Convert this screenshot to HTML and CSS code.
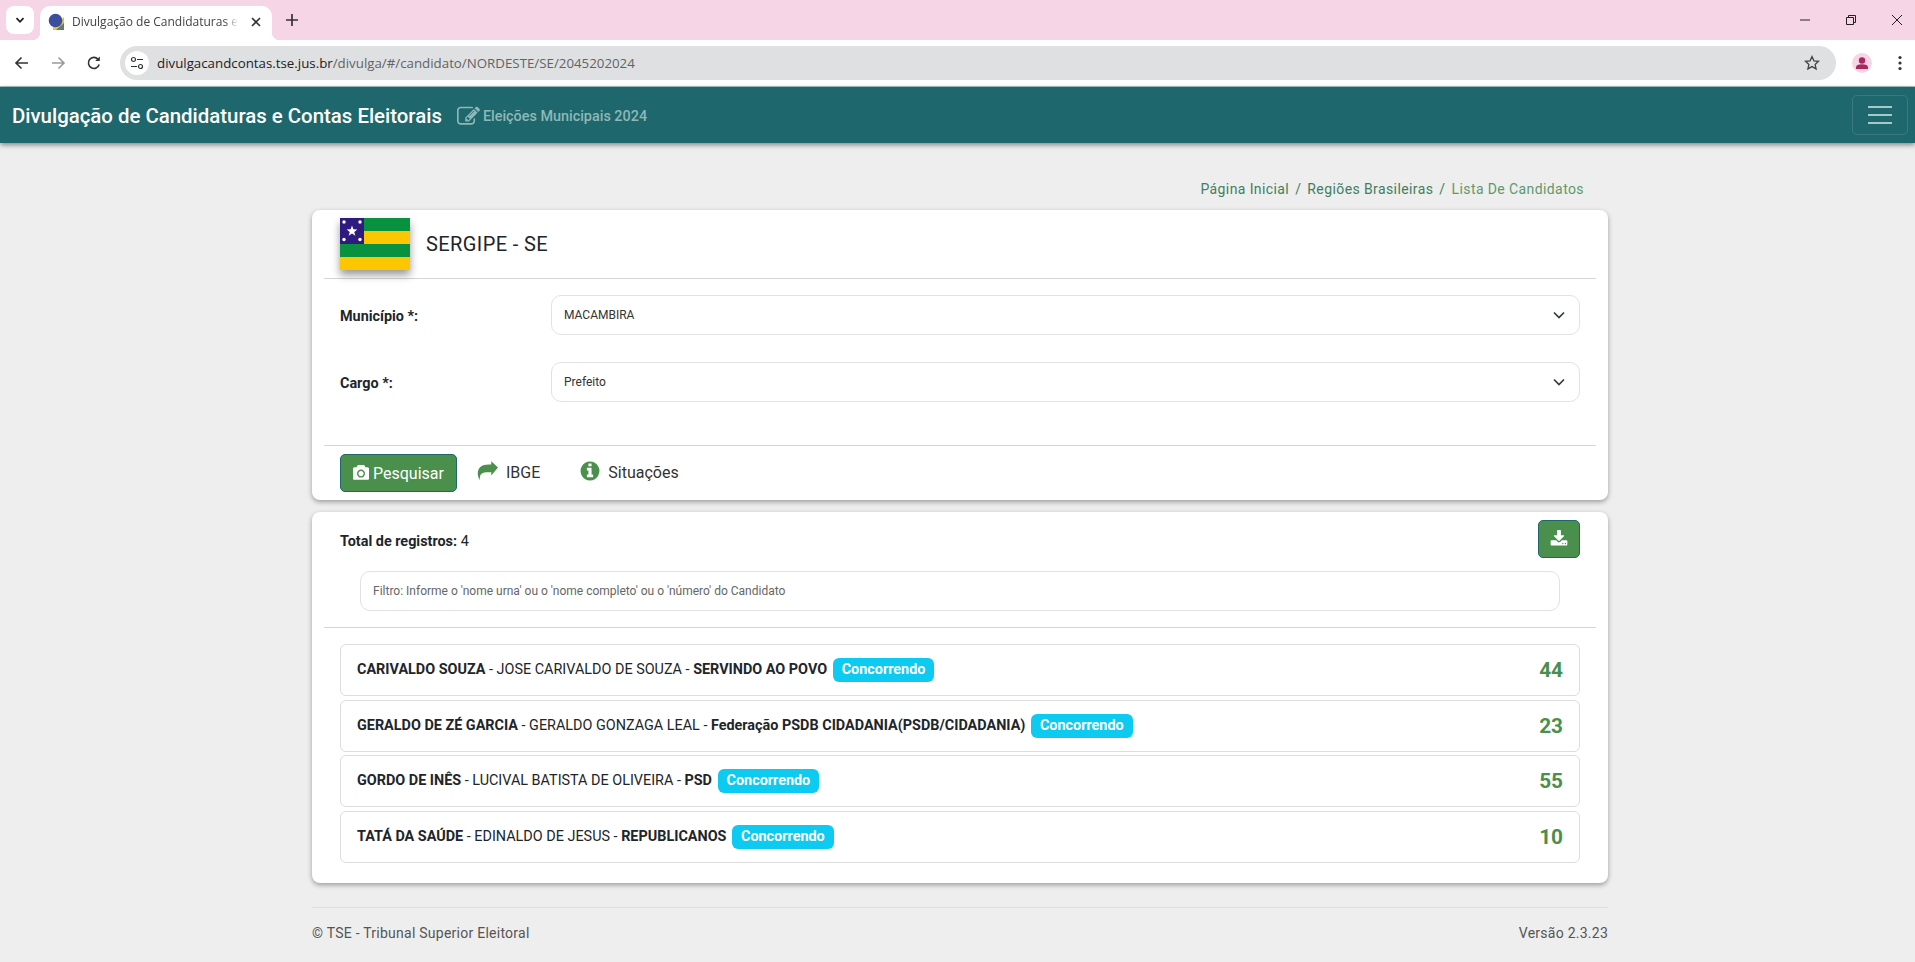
FILE: index.html
```html
<!DOCTYPE html>
<html lang="pt-BR">
  <head>
    <meta charset="UTF-8" />
    <title>Divulgação de Candidaturas e Contas Eleitorais</title>
    <link rel="stylesheet" href="styles.css">
  </head>
  <body>
    <!-- Browser frame -->
    <div class="tabstrip">
      <div class="tab-list">
        <svg width="12" height="12" viewBox="0 0 12 12"><path d="M2.5 4.2 6 7.8l3.5-3.6" fill="none" stroke="#222" stroke-width="1.8"/></svg>
      </div>
      <div class="tab">
        <svg class="favicon" width="18" height="18" viewBox="0 0 18 18">
          <path d="M5 14 16 4v13H5z" fill="#e8c33a"/>
          <path d="M8 17 16 10v7z" fill="#5d7f6a"/>
          <circle cx="7.5" cy="7.5" r="6.800" fill="#3c4f9c"/>
        </svg>
        <span class="tab-title">Divulgação de Candidaturas e Contas Eleitorais</span>
        <svg width="12" height="12" viewBox="0 0 12 12"><path d="M2 2l8 8M10 2l-8 8" stroke="#333" stroke-width="1.6"/></svg>
      </div>
      <svg class="new-tab" width="14" height="14" viewBox="0 0 14 14"><path d="M7 1v12M1 7h12" stroke="#333" stroke-width="1.7"/></svg>
      <div class="window-controls">
        <svg width="12" height="12" viewBox="0 0 12 12"><path d="M1 6h10" stroke="#222" stroke-width="1"/></svg>
        <svg width="12" height="12" viewBox="0 0 12 12"><path d="M1.5 3.5h7v7h-7zM3.5 3.5v-2h7v7h-2" fill="none" stroke="#222" stroke-width="1"/></svg>
        <svg width="12" height="12" viewBox="0 0 12 12"><path d="M1 1l10 10M11 1 1 11" stroke="#222" stroke-width="1"/></svg>
      </div>
    </div>
    <div class="toolbar">
      <svg class="tool" width="16" height="16" viewBox="0 0 16 16"><path d="M14 8H2.5M7.5 2.5 2 8l5.5 5.5" fill="none" stroke="#333" stroke-width="1.6"/></svg>
      <svg class="tool" width="16" height="16" viewBox="0 0 16 16"><path d="M2 8h11.5M8.5 2.5 14 8l-5.5 5.5" fill="none" stroke="#9a9a9a" stroke-width="1.6"/></svg>
      <svg class="tool" width="16" height="16" viewBox="0 0 16 16"><path d="M13.2 9.5A5.5 5.5 0 1 1 12 4.2" fill="none" stroke="#333" stroke-width="1.6"/><path d="M13.8 1.5v4.6H9.2z" fill="#333"/></svg>
      <div class="omnibox">
        <span class="site-info">
          <svg width="14" height="14" viewBox="0 0 14 14"><circle cx="3.5" cy="3.5" r="2" fill="none" stroke="#333" stroke-width="1.2"/><path d="M7 3.5h6M1 10.5h6" stroke="#333" stroke-width="1.2"/><circle cx="10.5" cy="10.5" r="2" fill="none" stroke="#333" stroke-width="1.2"/></svg>
        </span>
        <span class="url"><b>divulgacandcontas.tse.jus.br</b>/divulga/#/candidato/NORDESTE/SE/2045202024</span>
        <svg class="star" width="16" height="16" viewBox="0 0 16 16"><path d="M8 1.6l1.9 4.2 4.6.5-3.4 3.1 1 4.5L8 11.6l-4.1 2.3 1-4.5-3.4-3.1 4.6-.5z" fill="none" stroke="#444" stroke-width="1.3"/></svg>
      </div>
      <span class="avatar">
        <svg width="20" height="20" viewBox="0 0 20 20"><circle cx="10" cy="7.5" r="3.2" fill="#a9265f"/><path d="M4 16v-1.5c0-2 2-3.2 6-3.2s6 1.200 6 3.200V16z" fill="#a9265f"/></svg>
      </span>
      <svg class="kebab" width="4" height="16" viewBox="0 0 4 16"><circle cx="2" cy="2.500" r="1.600" fill="#333"/><circle cx="2" cy="8" r="1.600" fill="#333"/><circle cx="2" cy="13.500" r="1.600" fill="#333"/></svg>
    </div>

    <!-- Site header -->
    <nav class="navbar">
      <span class="brand">Divulgação de Candidaturas e Contas Eleitorais</span>
      <span class="election">
        <svg width="23" height="23" viewBox="0 0 1792 1792"><path fill="currentColor" d="M888 1184l116-116-152-152-116 116v56h96v96h56zm440-720q-16-16-33 1l-350 350q-17 17-1 33t33-1l350-350q17-17 1-33zm80 594v190q0 119-84.500 203.500t-203.500 84.500h-832q-119 0-203.500-84.500t-84.500-203.500v-832q0-119 84.500-203.500t203.500-84.500h832q63 0 117 25 15 7 18 23 3 17-9 29l-49 49q-14 14-32 8-23-6-45-6h-832q-66 0-113 47t-47 113v832q0 66 47 113t113 47h832q66 0 113-47t47-113v-126q0-13 9-22l64-64q15-15 35-7t20 29zm-96-738l288 288-672 672h-288v-288zm444 132l-92 92-288-288 92-92q28-28 68-28t68 28l152 152q28 28 28 68t-28 68z"/></svg>
        Eleições Municipais 2024
      </span>
      <button class="menu-toggle"><span></span><span></span><span></span></button>
    </nav>

    <main class="page">
      <div class="breadcrumb">
        <span>Página Inicial</span><i>/</i><span>Regiões Brasileiras</span><i>/</i><span class="current">Lista De Candidatos</span>
      </div>

      <section class="card search-card">
        <header class="state-header">
          <svg class="flag" width="70" height="52" viewBox="0 0 70 52">
            <rect width="70" height="13" fill="#08913f"/>
            <rect y="13" width="70" height="13" fill="#fcc700"/>
            <rect y="26" width="70" height="13" fill="#08913f"/>
            <rect y="39" width="70" height="13" fill="#fcc700"/>
            <rect width="24" height="26" fill="#2f1a80"/>
            <path d="M12 7.500l1.400 3.800 4 .1-3.200 2.500 1.200 3.900-3.400-2.300-3.400 2.300 1.200-3.900-3.200-2.500 4-.1z" fill="#fff"/>
            <circle cx="4" cy="4" r="1.700" fill="#fff"/>
            <circle cx="20" cy="4" r="1.700" fill="#fff"/>
            <circle cx="4" cy="21.500" r="1.700" fill="#fff"/>
            <circle cx="20" cy="21.500" r="1.700" fill="#fff"/>
          </svg>
          <h1>SERGIPE - SE</h1>
        </header>
        <div class="form-body">
          <div class="field">
            <label>Município *:</label>
            <div class="select">MACAMBIRA<svg width="14" height="14" viewBox="0 0 14 14"><path d="M2 4.500 7 9.500l5-5" fill="none" stroke="#343a40" stroke-width="1.700"/></svg></div>
          </div>
          <div class="field">
            <label>Cargo *:</label>
            <div class="select">Prefeito<svg width="14" height="14" viewBox="0 0 14 14"><path d="M2 4.500 7 9.500l5-5" fill="none" stroke="#343a40" stroke-width="1.700"/></svg></div>
          </div>
        </div>
        <div class="actions">
          <button class="btn-green btn-search">
            <svg width="16" height="16" viewBox="0 0 1792 1792"><path fill="currentColor" d="M896 672q119 0 203.500 84.500t84.500 203.500-84.500 203.500-203.500 84.500-203.500-84.500-84.500-203.500 84.500-203.500 203.500-84.500zm704-416q106 0 181 75t75 181v896q0 106-75 181t-181 75h-1408q-106 0-181-75t-75-181v-896q0-106 75-181t181-75h224l51-136q19-49 69.500-84.500t103.500-35.500h512q53 0 103.500 35.500t69.500 84.500l51 136h224zm-704 1152q185 0 316.500-131.500t131.500-316.500-131.500-316.500-316.500-131.500-316.500 131.500-131.500 316.500 131.500 316.500 316.500 131.500z"/></svg>
            Pesquisar
          </button>
          <a class="action-link link-ibge">
            <svg width="21" height="21" viewBox="0 0 1792 1792"><path fill="#4a8f4c" d="M1792 640 1216 96v288h-224C420 384 64 640 64 1180c0 220 90 400 190 520 -70-520 190-660 738-660h224v288z"/></svg>
            IBGE
          </a>
          <a class="action-link link-situacoes">
            <svg width="22" height="22" viewBox="0 0 1792 1792"><path fill="#4a8f4c" d="M1152 1376v-160q0-14-9-23t-23-9h-96v-512q0-14-9-23t-23-9h-320q-14 0-23 9t-9 23v160q0 14 9 23t23 9h96v320h-96q-14 0-23 9t-9 23v160q0 14 9 23t23 9h448q14 0 23-9t9-23zm-128-896v-160q0-14-9-23t-23-9h-192q-14 0-23 9t-9 23v160q0 14 9 23t23 9h192q14 0 23-9t9-23zm640 416q0 209-103 385.500t-279.500 279.500-385.500 103-385.500-103-279.500-279.500-103-385.500 103-385.500 279.500-279.500 385.500-103 385.500 103 279.500 279.500 103 385.500z"/></svg>
            Situações
          </a>
        </div>
      </section>

      <section class="card results-card">
        <div class="results-top">
          <span class="total"><b>Total de registros:</b> 4</span>
          <button class="btn-green btn-download">
            <svg width="18" height="18" viewBox="0 0 1792 1792"><path fill="currentColor" d="M1344 1344q0-26-19-45t-45-19-45 19-19 45 19 45 45 19 45-19 19-45zm256 0q0-26-19-45t-45-19-45 19-19 45 19 45 45 19 45-19 19-45zm128-224v320q0 40-28 68t-68 28h-1472q-40 0-68-28t-28-68v-320q0-40 28-68t68-28h465l135 136q58 56 136 56t136-56l136-136h464q40 0 68 28t28 68zm-325-569q17 41-14 70l-448 448q-18 19-45 19t-45-19l-448-448q-31-29-14-70 17-39 59-39h256v-448q0-26 19-45t45-19h256q26 0 45 19t19 45v448h256q42 0 59 39z"/></svg>
          </button>
        </div>
        <div class="filter">Filtro: Informe o 'nome urna' ou o 'nome completo' ou o 'número' do Candidato</div>
        <ul class="candidates">
          <li>
            <span class="cand-info"><b>CARIVALDO SOUZA</b> - JOSE CARIVALDO DE SOUZA - <b>SERVINDO AO POVO</b> <em class="badge">Concorrendo</em></span>
            <strong class="number">44</strong>
          </li>
          <li>
            <span class="cand-info"><b>GERALDO DE ZÉ GARCIA</b> - GERALDO GONZAGA LEAL - <b>Federação PSDB CIDADANIA(PSDB/CIDADANIA)</b> <em class="badge">Concorrendo</em></span>
            <strong class="number">23</strong>
          </li>
          <li>
            <span class="cand-info"><b>GORDO DE INÊS</b> - LUCIVAL BATISTA DE OLIVEIRA - <b>PSD</b> <em class="badge">Concorrendo</em></span>
            <strong class="number">55</strong>
          </li>
          <li>
            <span class="cand-info"><b>TATÁ DA SAÚDE</b> - EDINALDO DE JESUS - <b>REPUBLICANOS</b> <em class="badge">Concorrendo</em></span>
            <strong class="number">10</strong>
          </li>
        </ul>
      </section>

      <footer class="footer">
        <span>© TSE - Tribunal Superior Eleitoral</span>
        <span>Versão 2.3.23</span>
      </footer>
    </main>
  </body>
</html>
```

FILE: styles.css
```css
/* Reset */
html, body {
  margin: 0;
  padding: 0;
  height: 962px;
  overflow: hidden;
  background: #eee;
  font-family: Roboto, 'Liberation Sans', sans-serif;
  color: #212529;
}

/* Browser frame */
.tabstrip {
  display: flex;
  align-items: flex-start;
  height: 40px;
  background: #f6d6e6;
}

.tab-list {
  display: flex;
  align-items: center;
  justify-content: center;
  width: 28px;
  height: 28px;
  margin: 6px 6px 0;
  background: #fff;
  border-radius: 8px;
}

.tab {
  position: relative;
  display: flex;
  align-items: center;
  box-sizing: border-box;
  width: 232px;
  height: 34px;
  margin-top: 6px;
  padding: 0 10px 3px 8px;
  background: #fff;
  border-radius: 10px 10px 0 0;
}

.tab:before,
.tab:after {
  content: "";
  position: absolute;
  bottom: 0;
  width: 8px;
  height: 8px;
}

.tab:before {
  left: -8px;
  background: radial-gradient(circle at 0 0, #f6d6e6 8px, #fff 8.500px);
}

.tab:after {
  right: -8px;
  background: radial-gradient(circle at 100% 0, #f6d6e6 8px, #fff 8.500px);
}

.favicon {
  flex: none;
  margin-right: 6px;
}

.tab-title {
  flex: 1;
  overflow: hidden;
  white-space: nowrap;
  font-family: 'Open Sans', sans-serif;
  font-size: 12px;
  color: #45413f;
  margin-right: 12px;
  -webkit-mask-image: linear-gradient(90deg, #000 92%, transparent);
}

.new-tab {
  margin: 13px 0 0 13px;
}

.window-controls {
  display: flex;
  gap: 34px;
  margin: 14px 12px 0 auto;
}

.toolbar {
  display: flex;
  align-items: center;
  box-sizing: border-box;
  height: 47px;
  padding: 0 0 1px 14px;
  background: #fff;
  border-bottom: 1px solid #a9c4c4;
}

.tool {
  margin-right: 20px;
}

.omnibox {
  display: flex;
  align-items: center;
  box-sizing: border-box;
  width: 1716px;
  height: 34px;
  margin-left: -2px;
  padding: 0 16px 0 5px;
  background: #dfe0e2;
  border-radius: 17px;
}

.site-info {
  display: flex;
  align-items: center;
  justify-content: center;
  width: 24px;
  height: 24px;
  background: #fff;
  border-radius: 50%;
}

.url {
  flex: 1;
  margin-left: 8px;
  font-family: 'Open Sans', sans-serif;
  font-size: 13.300px;
  color: #5f6368;
}

.url b {
  font-weight: 400;
  color: #222;
}

.avatar {
  display: flex;
  align-items: center;
  justify-content: center;
  width: 20px;
  height: 20px;
  margin-left: 16px;
  background: #f6d6e6;
  border-radius: 50%;
}

.kebab {
  margin-left: 26px;
}

/* Site header */
.navbar {
  display: flex;
  align-items: center;
  height: 56px;
  padding: 0 7px 0 12px;
  background: #1e676c;
  box-shadow: 0 2px 5px rgba(0, 0, 0, 0.45);
  position: relative;
}

.brand {
  margin-top: 2px;
  font-size: 20.400px;
  font-weight: 500;
  color: #fff;
}

.election {
  display: flex;
  align-items: center;
  gap: 3px;
  margin: 2px 0 0 15px;
  font-size: 14.400px;
  font-weight: 500;
  color: #8fb8b8;
}

.menu-toggle {
  display: flex;
  flex-direction: column;
  gap: 6px;
  align-items: center;
  justify-content: center;
  width: 56px;
  height: 40px;
  margin-left: auto;
  background: none;
  border: 1px solid rgba(255, 255, 255, 0.12);
  border-radius: 5px;
}

.menu-toggle span {
  display: block;
  width: 24px;
  height: 2px;
  background: #a6c8c8;
}

/* Page */
.page {
  width: 1296px;
  margin-left: 312px;
}

.breadcrumb {
  display: flex;
  justify-content: flex-end;
  height: 67px;
  box-sizing: border-box;
  padding: 38px 24px 0 0;
  font-size: 14px;
  letter-spacing: 0.4px;
  color: #3f7f5f;
}

.breadcrumb i {
  font-style: normal;
  margin: 0 6px;
}

.breadcrumb .current {
  color: #5c9a6c;
}

.card {
  background: #fff;
  border-radius: 8px;
  padding: 0 12px;
  box-shadow: 0 2px 5px rgba(0, 0, 0, 0.35);
}

.search-card {
  height: 290px;
  box-sizing: border-box;
  margin-bottom: 12px;
}

.state-header {
  display: flex;
  align-items: center;
  gap: 16px;
  height: 69px;
  box-sizing: border-box;
  padding: 0 16px;
  border-bottom: 1px solid #d5d5d5;
}

.flag {
  box-shadow: 0 5px 8px rgba(0, 0, 0, 0.4);
}

h1 {
  margin: 0;
  font-size: 20px;
  font-weight: 400;
  letter-spacing: 0.4px;
}

.form-body {
  display: flex;
  flex-direction: column;
  gap: 27px;
  height: 167px;
  box-sizing: border-box;
  padding: 16px 16px 0;
  border-bottom: 1px solid #d5d5d5;
}

.field {
  display: flex;
  align-items: center;
}

.field label {
  width: 211px;
  padding-top: 2px;
  font-size: 14.400px;
  font-weight: 700;
}

.select {
  flex: 1;
  display: flex;
  align-items: center;
  justify-content: space-between;
  box-sizing: border-box;
  height: 40px;
  padding: 0 13px 0 12px;
  font-size: 12px;
  color: #333;
  border: 1px solid #e2e2e2;
  border-radius: 10px;
}

.actions {
  position: relative;
  display: flex;
  align-items: center;
  padding: 8px 16px 0;
}

.btn-green {
  display: flex;
  align-items: center;
  justify-content: center;
  background: #4a8f4c;
  border: 1px solid #1e676c;
  border-radius: 5px;
  color: #fff;
}

.btn-search {
  gap: 4px;
  box-sizing: border-box;
  width: 117px;
  height: 38px;
  font-family: inherit;
  font-size: 16px;
}

.action-link {
  display: flex;
  align-items: center;
  margin-top: -1px;
  font-size: 16px;
  color: #333;
}

.action-link svg {
  margin-top: -4px;
}

.link-ibge {
  gap: 8px;
  margin-left: 20px;
}

.link-situacoes {
  gap: 7px;
  margin-left: 39px;
}

.results-card {
  height: 371px;
  box-sizing: border-box;
}

.results-top {
  display: flex;
  align-items: center;
  justify-content: space-between;
  height: 46px;
  padding: 8px 16px 0;
  box-sizing: border-box;
}

.total {
  padding-top: 5px;
  font-size: 14.400px;
}

.total b {
  font-weight: 700;
}

.btn-download {
  box-sizing: border-box;
  width: 42px;
  height: 38px;
}

.filter {
  box-sizing: border-box;
  height: 40px;
  margin: 13px 36px 0 36px;
  padding: 0 12px;
  line-height: 38px;
  font-size: 12px;
  color: #666;
  border: 1px solid #e2e2e2;
  border-radius: 10px;
}

.candidates {
  list-style: none;
  display: flex;
  flex-direction: column;
  gap: 3.500px;
  margin: 16px 0 0;
  padding: 16px 16px 0;
  border-top: 1px solid #d5d5d5;
}

.candidates li {
  display: flex;
  align-items: center;
  justify-content: space-between;
  box-sizing: border-box;
  height: 52px;
  padding: 0 16px;
  border: 1px solid #ddd;
  border-radius: 6px;
}

.cand-info {
  font-size: 14.400px;
}

.cand-info b {
  font-weight: 700;
}

.badge {
  display: inline-block;
  margin-left: 2px;
  padding: 3px 9px 4px;
  font-style: normal;
  font-size: 14.400px;
  font-weight: 700;
  color: #fff;
  background: #0dcaf0;
  border-radius: 6px;
}

.number {
  font-size: 20.800px;
  font-weight: 700;
  color: #4a8f4c;
}

.footer {
  display: flex;
  justify-content: space-between;
  margin-top: 24px;
  padding-top: 17px;
  font-size: 14px;
  letter-spacing: 0.25px;
  color: #555;
  border-top: 1px solid #ddd;
}
```
